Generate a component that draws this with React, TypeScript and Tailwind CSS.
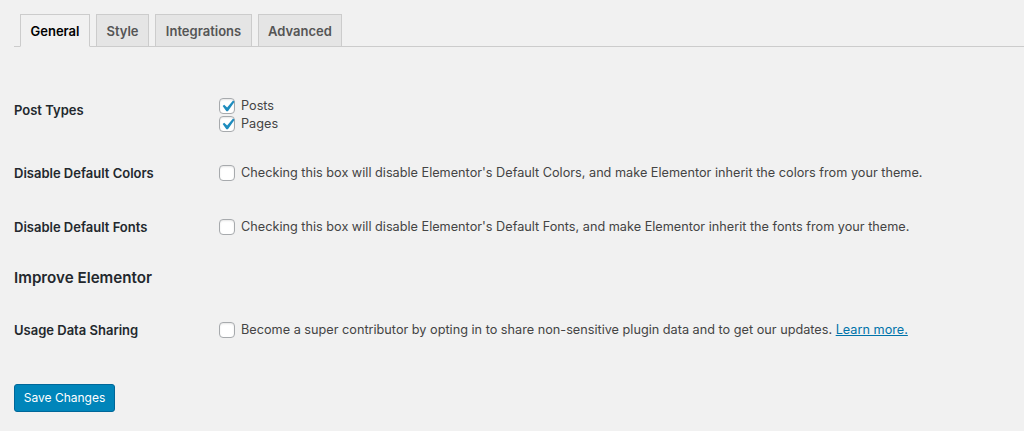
import React from "react";

const font = { fontFamily: "Inter, 'Noto Sans', sans-serif" };

function Box({ checked }: { checked?: boolean }) {
  return (
    <span className="relative inline-flex h-[16px] w-[16px] shrink-0 items-center justify-center rounded-[4px] border border-[#a7aaad] bg-white shadow-[inset_0_1px_2px_rgba(0,0,0,0.1)]">
      {checked && (
        <svg viewBox="0 0 20 20" className="absolute left-[-4px] top-[-4px] h-[23px] w-[23px]">
          <path d="M14.83 4.89l1.34.94-5.81 8.38H9.02L5.78 9.67l1.34-1.25 2.57 2.4z" fill="#1e8cbe" />
        </svg>
      )}
    </span>
  );
}

function Tab({ label, active, w }: { label: string; active?: boolean; w: string }) {
  return (
    <div
      className={
        "h-[33px] pt-[2px] flex items-center justify-center border border-[#ccc] text-[13px] font-semibold " +
        w +
        (active
          ? " bg-[#f1f1f1] border-b-[#f1f1f1] text-black"
          : " bg-[#e5e5e5] text-[#555]")
      }
    >
      {label}
    </div>
  );
}

export default function App() {
  return (
    <div className="min-h-[431px] w-[1024px] bg-[#f1f1f1] pl-[14px] pt-[14px]" style={font}>
      <div className="flex h-[33px] border-b border-[#ccc] pl-[6px]">
        <div className="-mb-px flex gap-[6px]">
          <Tab label="General" active w="w-[70px]" />
          <Tab label="Style" w="w-[53px]" />
          <Tab label="Integrations" w="w-[97px]" />
          <Tab label="Advanced" w="w-[84px]" />
        </div>
      </div>

      <div className="mt-[50px] flex">
        <div className="w-[205px] pt-[4px] text-[13px] leading-[18px] font-semibold text-[#23282d]">Post Types</div>
        <div className="flex flex-col text-[12.7px] leading-[18px] text-[#444]">
          <label className="flex items-center gap-[6px]"><Box checked />Posts</label>
          <label className="flex items-center gap-[6px]"><Box checked />Pages</label>
        </div>
      </div>

      <div className="mt-[31px] flex">
        <div className="w-[205px] text-[13px] leading-[18px] font-semibold text-[#23282d]">Disable Default Colors</div>
        <label className="flex items-center gap-[6px] text-[12.7px] leading-[18px] text-[#444]">
          <Box />
          Checking this box will disable Elementor's Default Colors, and make Elementor inherit the colors from your theme.
        </label>
      </div>

      <div className="mt-[36px] flex">
        <div className="w-[205px] text-[13px] leading-[18px] font-semibold text-[#23282d]">Disable Default Fonts</div>
        <label className="flex items-center gap-[6px] text-[12.7px] leading-[18px] text-[#444]">
          <Box />
          Checking this box will disable Elementor's Default Fonts, and make Elementor inherit the fonts from your theme.
        </label>
      </div>

      <h2 className="mt-[31px] text-[15.2px] leading-[22px] font-semibold text-[#23282d]">Improve Elementor</h2>

      <div className="mt-[32px] flex">
        <div className="w-[205px] text-[13px] leading-[18px] font-semibold text-[#23282d]">Usage Data Sharing</div>
        <label className="flex items-center gap-[6px] text-[12.7px] leading-[18px] text-[#444]">
          <Box />
          <span>
            Become a super contributor by opting in to share non-sensitive plugin data and to get our updates.{" "}
            <a className="text-[#0073aa] underline">Learn more.</a>
          </span>
        </label>
      </div>

      <button className="mt-[45px] h-[28px] w-[101px] rounded-[3px] border border-[#006799] bg-[#0085ba] text-[12px] text-white">
        Save Changes
      </button>
    </div>
  );
}
